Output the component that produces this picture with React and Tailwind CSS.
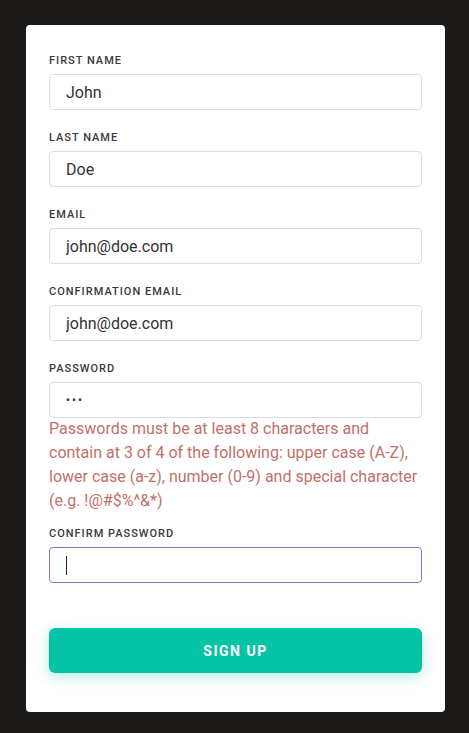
import React from 'react';

const fields = [
  { label: 'First Name', value: 'John' },
  { label: 'Last Name', value: 'Doe' },
  { label: 'Email', value: 'john@doe.com' },
  { label: 'Confirmation Email', value: 'john@doe.com' },
];

const Label = ({ children }) => (
  <label className="block h-4 mb-[5px] text-[11px] leading-4 font-medium uppercase tracking-[1px] text-[#3a3a3a]">
    {children}
  </label>
);

export default function App() {
  return (
    <div className="min-h-[733px] bg-[#1b1a19] pt-[25px] pb-[21px]" style={{ fontFamily: 'Roboto, "Liberation Sans", sans-serif' }}>
      <form className="ml-[26px] w-[419px] bg-white rounded-[4px] px-[23px] pt-[28px] pb-[39px]">
        {fields.map((f) => (
          <div key={f.label} className="mb-[20px]">
            <Label>{f.label}</Label>
            <input
              readOnly
              value={f.value}
              className="w-full h-[36px] px-4 border border-[#dcdcdc] rounded-[4px] text-base text-[#333] outline-none"
            />
          </div>
        ))}

        {/* Password with error */}
        <div>
          <Label>Password</Label>
          <input
            readOnly
            type="password"
            value="abc"
            className="w-full h-[36px] px-4 border border-[#dcdcdc] rounded-[4px] text-[12px] text-[#333] outline-none tracking-[2px]"
          />
          <p className="-mt-[1px] text-base leading-6 text-[#c2706a]">
            Passwords must be at least 8 characters and contain at 3 of 4 of the following: upper case (A-Z), lower case (a-z), number (0-9) and special character (e.g. !@#$%^&*)
          </p>
        </div>

        <div className="mt-[13px]">
          <Label>Confirm Password</Label>
          <div className="w-full h-[36px] px-4 border border-[#9a6fc2] rounded-[4px] flex items-center">
            <span className="block w-px h-[19px] bg-[#222]" />
          </div>
        </div>

        <button
          type="button"
          className="mt-[45px] w-full h-[45px] rounded-[6px] bg-[#05c4a6] text-white text-sm font-bold uppercase tracking-[1.5px] shadow-[0_4px_14px_rgba(5,196,166,0.3)]"
        >
          Sign up
        </button>
      </form>
    </div>
  );
}
